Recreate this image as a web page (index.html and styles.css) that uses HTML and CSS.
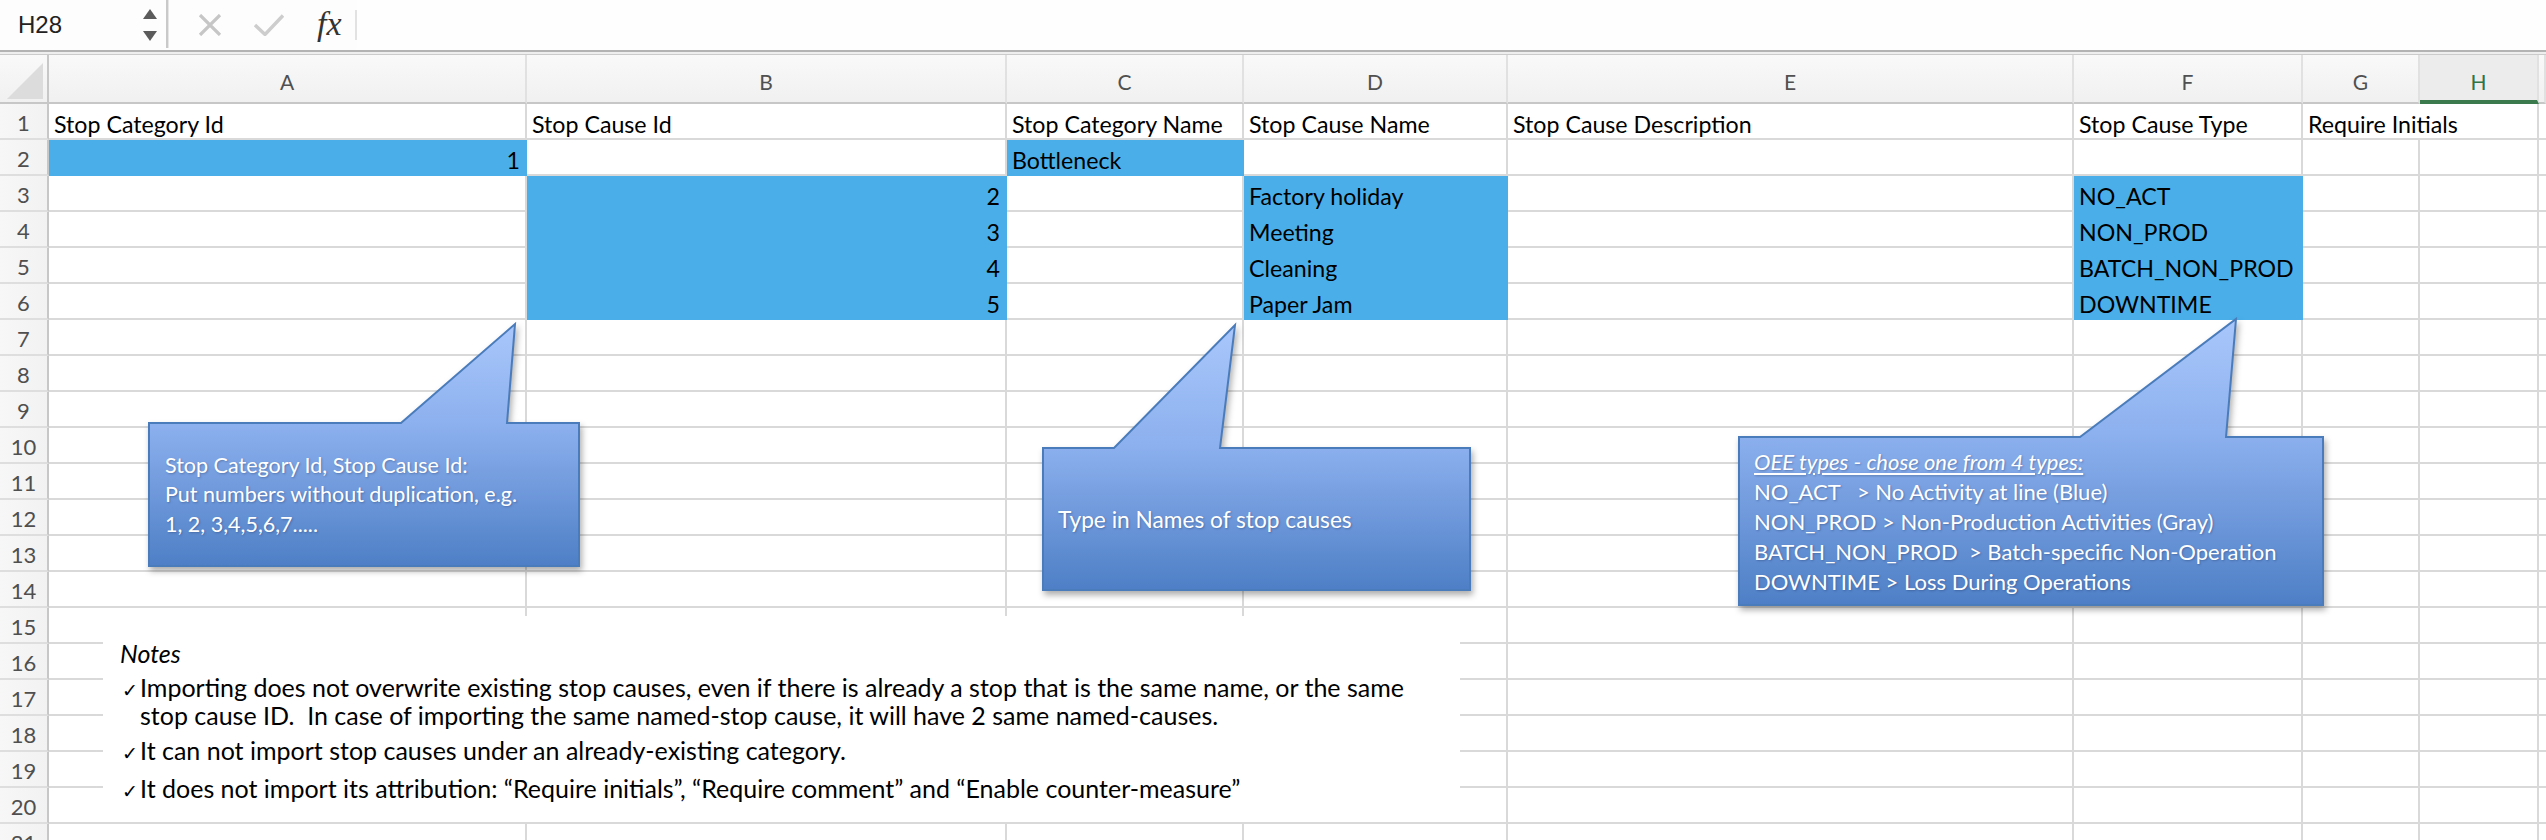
FILE: index.html
```html
<!DOCTYPE html>
<html lang="en">
<head>
<meta charset="utf-8">
<title>Stop causes import sheet</title>
<link rel="stylesheet" href="styles.css">
</head>
<body>
<div class="toolbar">
  <div class="namebox">
    <span class="ref">H28</span>
    <svg class="spin" width="16" height="34" viewBox="0 0 16 34"><path d="M8 1 L15 11 L1 11 Z" fill="#5b5b5b"/><path d="M1 23 L15 23 L8 33 Z" fill="#5b5b5b"/></svg>
  </div>
  <div class="vsep"></div>
  <svg class="ic-x" width="24" height="22" viewBox="0 0 24 22"><path d="M2 1 L22 21 M22 1 L2 21" stroke="#c6c6c6" stroke-width="3.2" fill="none"/></svg>
  <svg class="ic-ok" width="30" height="22" viewBox="0 0 30 22"><path d="M1 11 L11 20.5 L29 1.5" stroke="#cdcdcd" stroke-width="3.4" fill="none"/></svg>
  <span class="fx">fx</span>
  <div class="vsep2"></div>
  <div class="formula"></div>
</div>
<div class="split"></div>

<div class="sheet">
  <div class="hdr">
    <div class="corner"><svg width="38" height="38" viewBox="0 0 38 38"><path d="M37 1 L37 37 L1 37 Z" fill="#dcdcdc"/></svg></div>
    <div>A</div><div>B</div><div>C</div><div>D</div><div>E</div><div>F</div><div>G</div><div class="sel">H</div><div></div>
  </div>

  <div class="row"><div class="rn">1</div><div>Stop Category Id</div><div>Stop Cause Id</div><div>Stop Category Name</div><div>Stop Cause Name</div><div>Stop Cause Description</div><div>Stop Cause Type</div><div class="span2">Require Initials</div><div></div></div>
  <div class="row"><div class="rn">2</div><div class="fill num">1</div><div></div><div class="fill">Bottleneck</div><div></div><div></div><div></div><div></div><div></div><div></div></div>
  <div class="row"><div class="rn">3</div><div></div><div class="fill num">2</div><div></div><div class="fill">Factory holiday</div><div></div><div class="fill">NO_ACT</div><div></div><div></div><div></div></div>
  <div class="row"><div class="rn">4</div><div></div><div class="fill num">3</div><div></div><div class="fill">Meeting</div><div></div><div class="fill">NON_PROD</div><div></div><div></div><div></div></div>
  <div class="row"><div class="rn">5</div><div></div><div class="fill num">4</div><div></div><div class="fill">Cleaning</div><div></div><div class="fill">BATCH_NON_PROD</div><div></div><div></div><div></div></div>
  <div class="row"><div class="rn">6</div><div></div><div class="fill num">5</div><div></div><div class="fill">Paper Jam</div><div></div><div class="fill">DOWNTIME</div><div></div><div></div><div></div></div>
  <div class="row"><div class="rn">7</div><div></div><div></div><div></div><div></div><div></div><div></div><div></div><div></div><div></div></div>
  <div class="row"><div class="rn">8</div><div></div><div></div><div></div><div></div><div></div><div></div><div></div><div></div><div></div></div>
  <div class="row"><div class="rn">9</div><div></div><div></div><div></div><div></div><div></div><div></div><div></div><div></div><div></div></div>
  <div class="row"><div class="rn">10</div><div></div><div></div><div></div><div></div><div></div><div></div><div></div><div></div><div></div></div>
  <div class="row"><div class="rn">11</div><div></div><div></div><div></div><div></div><div></div><div></div><div></div><div></div><div></div></div>
  <div class="row"><div class="rn">12</div><div></div><div></div><div></div><div></div><div></div><div></div><div></div><div></div><div></div></div>
  <div class="row"><div class="rn">13</div><div></div><div></div><div></div><div></div><div></div><div></div><div></div><div></div><div></div></div>
  <div class="row"><div class="rn">14</div><div></div><div></div><div></div><div></div><div></div><div></div><div></div><div></div><div></div></div>
  <div class="row"><div class="rn">15</div><div></div><div></div><div></div><div></div><div></div><div></div><div></div><div></div><div></div></div>
  <div class="row"><div class="rn">16</div><div></div><div></div><div></div><div></div><div></div><div></div><div></div><div></div><div></div></div>
  <div class="row"><div class="rn">17</div><div></div><div></div><div></div><div></div><div></div><div></div><div></div><div></div><div></div></div>
  <div class="row"><div class="rn">18</div><div></div><div></div><div></div><div></div><div></div><div></div><div></div><div></div><div></div></div>
  <div class="row"><div class="rn">19</div><div></div><div></div><div></div><div></div><div></div><div></div><div></div><div></div><div></div></div>
  <div class="row"><div class="rn">20</div><div></div><div></div><div></div><div></div><div></div><div></div><div></div><div></div><div></div></div>
  <div class="row"><div class="rn">21</div><div></div><div></div><div></div><div></div><div></div><div></div><div></div><div></div><div></div></div>
</div>

<div class="callout c1">
  <svg viewBox="0 0 432 244" width="432" height="244"><defs><linearGradient id="g1" x1="0" y1="0" x2="0" y2="1"><stop offset="0" stop-color="#a9c7fb"/><stop offset="0.42" stop-color="#8cb0ee"/><stop offset="1" stop-color="#4e7fc6"/></linearGradient></defs><path d="M1 100 L253 100 L367 1 L359 100 L431 100 L431 243 L1 243 Z" fill="url(#g1)" stroke="#4a7cbc" stroke-width="2"/></svg>
  <div class="body">
    <div>Stop Category Id, Stop Cause Id:</div>
    <div>Put numbers without duplication, e.g.</div>
    <div>1, 2, 3,4,5,6,7.....</div>
  </div>
</div>

<div class="callout c2">
  <svg viewBox="0 0 429 267" width="429" height="267"><defs><linearGradient id="g2" x1="0" y1="0" x2="0" y2="1"><stop offset="0" stop-color="#a9c7fb"/><stop offset="0.46" stop-color="#8cb0ee"/><stop offset="1" stop-color="#4e7fc6"/></linearGradient></defs><path d="M1 124 L72 124 L193 1 L178 124 L428 124 L428 266 L1 266 Z" fill="url(#g2)" stroke="#4a7cbc" stroke-width="2"/></svg>
  <div class="body">
    <div>Type in Names of stop causes</div>
  </div>
</div>

<div class="callout c3">
  <svg viewBox="0 0 586 288" width="586" height="288"><defs><linearGradient id="g3" x1="0" y1="0" x2="0" y2="1"><stop offset="0" stop-color="#a9c7fb"/><stop offset="0.41" stop-color="#8cb0ee"/><stop offset="1" stop-color="#4e7fc6"/></linearGradient></defs><path d="M1 119 L342 119 L498 1 L488 119 L585 119 L585 287 L1 287 Z" fill="url(#g3)" stroke="#4a7cbc" stroke-width="2"/></svg>
  <div class="body">
    <div class="title">OEE types - chose one from 4 types:</div>
    <div class="pre">NO_ACT   &gt; No Activity at line (Blue)</div>
    <div class="pre">NON_PROD &gt; Non-Production Activities (Gray)</div>
    <div class="pre">BATCH_NON_PROD  &gt; Batch-specific Non-Operation</div>
    <div class="pre">DOWNTIME &gt; Loss During Operations</div>
  </div>
</div>

<div class="notes">
  <div class="notes-title">Notes</div>
  <div class="item"><span class="tick">✓</span><span>Importing does not overwrite existing stop causes, even if there is already a stop that is the same name, or the same<br>stop cause ID.&nbsp; In case of importing the same named-stop cause, it will have 2 same named-causes.</span></div>
  <div class="item"><span class="tick">✓</span><span>It can not import stop causes under an already-existing category.</span></div>
  <div class="item"><span class="tick">✓</span><span>It does not import its attribution: “Require initials”, “Require comment” and “Enable counter-measure”</span></div>
</div>
</body>
</html>
```

FILE: styles.css
```css
html, body {
  margin: 0;
  padding: 0;
}
body {
  width: 2546px;
  height: 840px;
  overflow: hidden;
  position: relative;
  background: #ffffff;
  font-family: "Lato", "Liberation Sans", sans-serif;
  color: #000;
}

/* ---------- formula bar ---------- */
.toolbar {
  height: 50px;
  display: flex;
  align-items: center;
  background: #fdfdfd;
}
.namebox {
  width: 166px;
  height: 50px;
  display: flex;
  align-items: center;
  justify-content: space-between;
  padding: 0 8px 0 18px;
  box-sizing: border-box;
}
.ref {
  font-family: "Liberation Sans", Arial, sans-serif;
  font-size: 24px;
  color: #222;
}
.spin { display: block; }
.vsep {
  width: 2px;
  height: 48px;
  align-self: flex-start;
  background: #c9c9c9;
  border-right: 1px solid #e6e6e6;
}
.ic-x { margin-left: 29px; display: block; }
.ic-ok { margin-left: 32px; display: block; }
.fx {
  margin-left: 33px;
  font-family: "Liberation Serif", "Times New Roman", serif;
  font-style: italic;
  font-size: 34px;
  color: #333;
  line-height: 1;
  padding-bottom: 3px;
}
.vsep2 {
  width: 2px;
  height: 30px;
  margin-left: 13px;
  background: #e2e2e2;
}
.formula {
  flex: 1;
  height: 50px;
  background: #fefefe;
}
.split {
  height: 5px;
  box-sizing: border-box;
  border-top: 2px solid #b3b3b3;
  border-bottom: 1px solid #cbcbcb;
  background: #eeeeee;
}

/* ---------- sheet ---------- */
.sheet {
  --cols: 49px 478px 480px 237px 264px 566px 229px 117px 119px 1fr;
}
.hdr {
  display: grid;
  grid-template-columns: var(--cols);
  height: 49px;
  background: linear-gradient(#f9f9f9, #f0f0f0);
}
.hdr > div {
  box-sizing: border-box;
  border-right: 2px solid #e1e1e1;
  border-bottom: 2px solid #c7c7c7;
  display: flex;
  align-items: center;
  justify-content: center;
  padding-top: 5px;
  font-size: 21px;
  color: #505050;
}
.hdr > .corner {
  border-right-color: #c7c7c7;
  justify-content: flex-end;
  align-items: flex-end;
  padding: 0 3px 2px 0;
}
.hdr > .corner svg { display: block; }
.hdr > .sel {
  background: #ececec;
  color: #2e7445;
  border-bottom: 4px solid #3b7a4d;
  padding-top: 7px;
}

.row {
  display: grid;
  grid-template-columns: var(--cols);
  height: 36px;
}
.row > div {
  box-sizing: border-box;
  border-right: 2px solid #d9d9d9;
  border-bottom: 2px solid #d9d9d9;
  padding: 0 5px;
  display: flex;
  align-items: flex-end;
  white-space: nowrap;
  overflow: hidden;
  font-size: 23.2px;
  line-height: 28px;
  padding-bottom: 0;
}
.row > .rn {
  background: linear-gradient(90deg, #f7f7f7, #f2f2f2);
  border-right-color: #c7c7c7;
  border-bottom-color: #dedede;
  justify-content: center;
  color: #4f4f4f;
  font-size: 22px;
  padding: 0 0 1px 0;
}
.row > .fill {
  background: #4aafe9;
  border-color: #4aafe9;
}
.row > .num { justify-content: flex-end; }
.row > .span2 { grid-column: span 2; }

/* ---------- callouts ---------- */
.callout {
  position: absolute;
}
.callout svg {
  position: absolute;
  left: 0;
  top: 0;
  display: block;
  overflow: visible;
  filter: drop-shadow(2px 4px 3px rgba(0, 0, 0, 0.32));
}
.callout .body {
  position: absolute;
  left: 0;
  right: 0;
  bottom: 0;
  display: flex;
  flex-direction: column;
  justify-content: center;
  padding-left: 17px;
  color: #ffffff;
  font-size: 21.5px;
  line-height: 29.5px;
  text-shadow: 1px 1px 2px rgba(30, 50, 90, 0.35);
  white-space: nowrap;
}
.c1 { left: 148px; top: 323px; width: 432px; height: 244px; }
.c1 .body { height: 144px; }
.c2 { left: 1042px; top: 324px; width: 429px; height: 267px; }
.c2 .body { height: 143px; font-size: 22.7px; padding-left: 16px; }
.c3 { left: 1738px; top: 318px; width: 586px; height: 288px; }
.c3 .body { height: 169px; padding-left: 16px; line-height: 30px; font-size: 22px; }
.c3 .title { font-style: italic; text-decoration: underline; text-underline-offset: 3px; }
.c3 .pre { white-space: pre; }

/* ---------- notes text box ---------- */
.notes {
  position: absolute;
  left: 103px;
  top: 616px;
  width: 1357px;
  height: 206px;
  background: #ffffff;
  box-sizing: border-box;
  padding: 22px 0 0 17px;
  font-size: 25px;
  line-height: 28px;
  color: #000;
}
.notes-title {
  font-style: italic;
  line-height: 30px;
  margin-bottom: -2px;
}
.item {
  display: flex;
  align-items: baseline;
  margin-top: 7px;
}
.tick {
  width: 20px;
  flex: none;
  box-sizing: border-box;
  padding-left: 2px;
  font-family: "DejaVu Sans", sans-serif;
  font-size: 19px;
}
```
